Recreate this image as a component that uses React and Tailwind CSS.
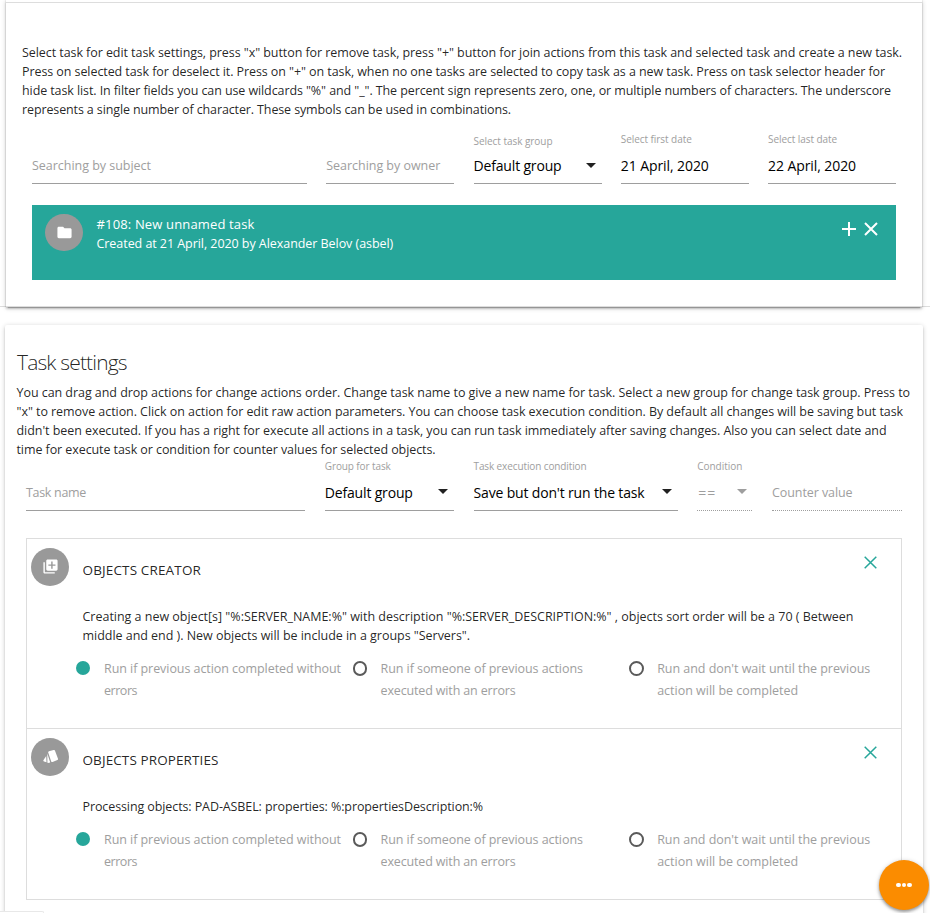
const introLines = [
  ['tracking-[-0.067px]', 'Select task for edit task settings, press "x" button for remove task, press "+" button for join actions from this task and selected task and create a new task.'],
  ['tracking-[-0.078px]', 'Press on selected task for deselect it. Press on "+" on task, when no one tasks are selected to copy task as a new task. Press on task selector header for'],
  ['tracking-[-0.096px]', 'hide task list. In filter fields you can use wildcards "%" and "_". The percent sign represents zero, one, or multiple numbers of characters. The underscore'],
  ['tracking-[-0.121px]', 'represents a single number of character. These symbols can be used in combinations.'],
];

const settingsLines = [
  ['tracking-[-0.051px]', 'You can drag and drop actions for change actions order. Change task name to give a new name for task. Select a new group for change task group. Press to'],
  ['tracking-[-0.061px]', '"x" to remove action. Click on action for edit raw action parameters. You can choose task execution condition. By default all changes will be saving but task'],
  ['tracking-[-0.059px]', "didn't been executed. If you has a right for execute all actions in a task, you can run task immediately after saving changes. Also you can select date and"],
  ['tracking-[-0.082px]', 'time for execute task or condition for counter values for selected objects.'],
];

const radios = [
  [['tracking-[-0.058px]', 'Run if previous action completed without'], ['tracking-[-0.47px]', 'errors']],
  [['tracking-[-0.07px]', 'Run if someone of previous actions'], ['tracking-[-0.152px]', 'executed with an errors']],
  [['tracking-[-0.044px]', "Run and don't wait until the previous"], ['tracking-[-0.013px]', 'action will be completed']],
];

function Lines({ lines, className }) {
  return (
    <div className={className}>
      {lines.map(([tracking, text]) => (
        <div key={text} className={`whitespace-nowrap ${tracking}`}>{text}</div>
      ))}
    </div>
  );
}

function Caret({ className }) {
  return (
    <svg className={`h-[5px] w-[10px] shrink-0 ${className}`} viewBox="0 0 10 5">
      <path d="M0 0h10L5 5z" fill="currentColor" />
    </svg>
  );
}

function Field({ label, labelClass, width, value, valueClass = 'text-black', line = 'border-solid', caret }) {
  return (
    <div className={`flex h-[50px] flex-col justify-between border-b border-[#9e9e9e] whitespace-nowrap ${line} ${width}`}>
      <div className={`h-[14px] text-[10px] leading-[14px] text-[#9e9e9e] ${labelClass}`}>{label}</div>
      <div className="flex h-[27px] items-start justify-between">
        <span className={`leading-[20px] ${valueClass}`}>{value}</span>
        {caret && <Caret className={caret} />}
      </div>
    </div>
  );
}

function CloseIcon() {
  return (
    <svg className="h-[13px] w-[13px]" viewBox="0 0 13 13" fill="none" stroke="#26a69a" strokeWidth="1.5">
      <path d="M.7.7l11.6 11.6M12.3.7L.7 12.3" />
    </svg>
  );
}

function Action({ icon, title, titleClass, lines, height }) {
  return (
    <div className={`flex border-b border-[#ddd] pl-1 ${height}`}>
      <div className="mt-[9px] flex size-[38px] shrink-0 items-center justify-center rounded-full bg-[#999] pb-[2px]">{icon}</div>
      <div className="ml-[7px] flex-1">
        <div className="flex h-[68px] items-start justify-between pr-[24px] pl-[6.5px]">
          <div className={`mt-[21px] text-[13.5px] leading-[20px] ${titleClass}`}>{title}</div>
          <div className="mt-[17px]"><CloseIcon /></div>
        </div>
        <Lines lines={lines} className="pl-[6.5px] leading-[19px]" />
        <div className="mt-[13px] flex">
          {radios.map((label, i) => (
            <div key={i} className="flex w-[276.6px] shrink-0 last:w-[250px]">
              {i === 0
                ? <span className="mt-[3px] size-[14px] shrink-0 rounded-full bg-[#26a69a]" />
                : <span className="mt-[3px] size-[14.5px] shrink-0 rounded-full border-2 border-[#5a5a5a]" />}
              <Lines lines={label} className={i === 0 ? 'ml-[14px] leading-[22px] text-[#9e9e9e]' : 'ml-[13.5px] leading-[22px] text-[#9e9e9e]'} />
            </div>
          ))}
        </div>
      </div>
    </div>
  );
}

export default function App() {
  return (
    <div className="relative h-[913px] w-[930px] overflow-hidden bg-white font-['Open_Sans','Noto_Sans',sans-serif] text-[12.5px] text-black/87">
      <div className="h-[307px] border-b border-[#ddd] px-[6px]">
        <div className="h-[307px] w-[916px] border-b border-[#ddd] bg-white shadow-[0_2px_2px_0_rgba(0,0,0,0.14),0_3px_1px_-2px_rgba(0,0,0,0.2),0_1px_5px_0_rgba(0,0,0,0.2),0_0_1px_rgba(0,0,0,0.25)]">
          <div className="h-[3px] border-b border-[#ddd]" />
          <Lines lines={introLines} className="mt-[40px] ml-4 leading-[19px]" />
          <div className="mt-[15px] ml-[26px] flex w-[864px] items-end justify-between">
            <Field width="w-[275px]" value="Searching by subject" valueClass="text-[#9e9e9e] tracking-[-0.024px]" />
            <Field width="w-[128px]" value="Searching by owner" valueClass="text-[#9e9e9e] tracking-[-0.033px]" />
            <Field width="w-[128px]" label="Select task group" labelClass="tracking-[-0.042px]" value="Default group" valueClass="text-[14px] text-black tracking-[-0.166px]" caret="mt-[7px] mr-[6px]" />
            <Field width="w-[128px]" label="Select first date" labelClass="-mt-[2px] tracking-[-0.056px]" value="21 April, 2020" valueClass="text-[14px] text-black tracking-[-0.081px]" />
            <Field width="w-[128px]" label="Select last date" labelClass="-mt-[2px] tracking-[-0.066px]" value="22 April, 2020" valueClass="text-[14px] text-black tracking-[-0.081px]" />
          </div>
          <div className="mt-[21px] ml-[26px] flex h-[75px] w-[864px] bg-[#26a69a] pl-[13px] text-white">
            <div className="mt-[9px] flex h-[37px] w-[38px] items-center justify-center rounded-full bg-[#999] pb-px">
              <svg className="size-[17px]" viewBox="0 0 24 24" fill="white">
                <path d="M10 4H4c-1.1 0-1.99.9-1.99 2L2 18c0 1.100.9 2 2 2h16c1.100 0 2-.9 2-2V8c0-1.100-.9-2-2-2h-8l-2-2z" />
              </svg>
            </div>
            <div className="mt-[10px] ml-[13.500px] leading-[19px] whitespace-nowrap">
              <div className="text-[13px] tracking-[0.149px]">#108: New unnamed task</div>
              <div className="tracking-[-0.055px]">Created at 21 April, 2020 by Alexander Belov (asbel)</div>
            </div>
            <div className="mt-[17px] mr-[18px] ml-auto flex gap-[8px]">
              <svg className="size-[14px]" viewBox="0 0 14 14" fill="none" stroke="white" strokeWidth="2"><path d="M7 0v14M0 7h14" /></svg>
              <svg className="size-[14px]" viewBox="0 0 14 14" fill="none" stroke="white" strokeWidth="2"><path d="M1 1l12 12M13 1L1 13" /></svg>
            </div>
          </div>
        </div>
      </div>

      <div className="mt-[18px] ml-[5px] h-[640px] w-[918px] rounded-[2px] bg-white pt-[24px] shadow-[0_2px_2px_0_rgba(0,0,0,0.14),0_3px_1px_-2px_rgba(0,0,0,0.12),0_1px_5px_0_rgba(0,0,0,0.2)]">
        <h1 className="ml-[12px] h-[34px] text-[21px] leading-[27px] font-light tracking-[-0.85px]">Task settings</h1>
        <Lines lines={settingsLines} className="ml-[11.500px] leading-[19px]" />
        <div className="mt-[2px] ml-[21px] flex w-[876px] items-end justify-between">
          <Field width="w-[279px]" value="Task name" valueClass="text-[#9e9e9e] tracking-[-0.312px]" />
          <Field width="w-[129px]" label="Group for task" labelClass="-mt-[2px] tracking-[-0.102px]" value="Default group" valueClass="text-[14px] text-black tracking-[-0.166px]" caret="mt-[6px] mr-[6px]" />
          <Field width="w-[204px]" label="Task execution condition" labelClass="-mt-[2px] tracking-[-0.113px]" value="Save but don't run the task" valueClass="text-[14px] text-black tracking-[-0.163px]" caret="mt-[6px] mr-[6px]" />
          <Field width="w-[55px]" label="Condition" labelClass="-mt-[2px] tracking-[-0.036px]" line="border-dotted" value="==" valueClass="pl-[1px] text-[14px] text-[#9e9e9e] tracking-[1px]" caret="mt-[6px] mr-[5px] text-[#9e9e9e]" />
          <Field width="w-[130px]" line="border-dotted" value="Counter value" valueClass="text-[#9e9e9e] tracking-[-0.084px]" />
        </div>
        <div className="mt-[27px] ml-[21px] w-[876px] border border-b-0 border-[#ddd]">
          <Action
            height="h-[190px]"
            title="OBJECTS CREATOR"
            titleClass="tracking-[0.144px]"
            icon={
              <svg className="size-[17px]" viewBox="0 0 24 24" fill="white">
                <path d="M4 6H2v14c0 1.100.9 2 2 2h14v-2H4V6zm16-4H8c-1.100 0-2 .9-2 2v12c0 1.100.9 2 2 2h12c1.100 0 2-.9 2-2V4c0-1.100-.9-2-2-2zm-1 9h-4v4h-2v-4H9V9h4V5h2v4h4v2z" />
              </svg>
            }
            lines={[
              ['tracking-[-0.015px]', 'Creating a new object[s] "%:SERVER_NAME:%" with description "%:SERVER_DESCRIPTION:%" , objects sort order will be a 70 ( Between'],
              ['tracking-[-0.032px]', 'middle and end ). New objects will be include in a groups "Servers".'],
            ]}
          />
          <Action
            height="h-[171px]"
            title="OBJECTS PROPERTIES"
            titleClass="tracking-[0.099px]"
            icon={
              <svg className="h-[13px] w-[15px]" viewBox="0 0 15 13" fill="white">
                <path d="M6 1.200L10.600 0q1-.2 1.400.7l3 8q.3 1-.6 1.400L9.600 12q-1 .3-1.400-.6L5.200 2.600q-.3-1 .8-1.400z" />
                <path d="M4.300 3.600L7.200 12.400 5 12.900q-.7-.2-.6-1z" />
                <path d="M3.200 6L3.500 12.200 1 11.500q-1-.4-.6-1.300z" />
              </svg>
            }
            lines={[['tracking-[-0.1px]', 'Processing objects: PAD-ASBEL: properties: %:propertiesDescription:%']]}
          />
        </div>
      </div>

      <div className="absolute top-[860px] left-[879px] flex size-[50px] items-center justify-center gap-[1px] rounded-full bg-[#fb8c00] shadow-[0_2px_3px_0_rgba(0,0,0,0.3),0_1px_5px_0_rgba(0,0,0,0.2)]">
        <span className="size-[4.500px] rounded-full bg-white" />
        <span className="size-[4.500px] rounded-full bg-white" />
        <span className="size-[4.500px] rounded-full bg-white" />
      </div>
      <div className="absolute top-[911px] left-0 h-[2px] w-[44px] rounded-tr-[3px] border-t border-r border-[#e8e8e8] bg-white" />
    </div>
  );
}
